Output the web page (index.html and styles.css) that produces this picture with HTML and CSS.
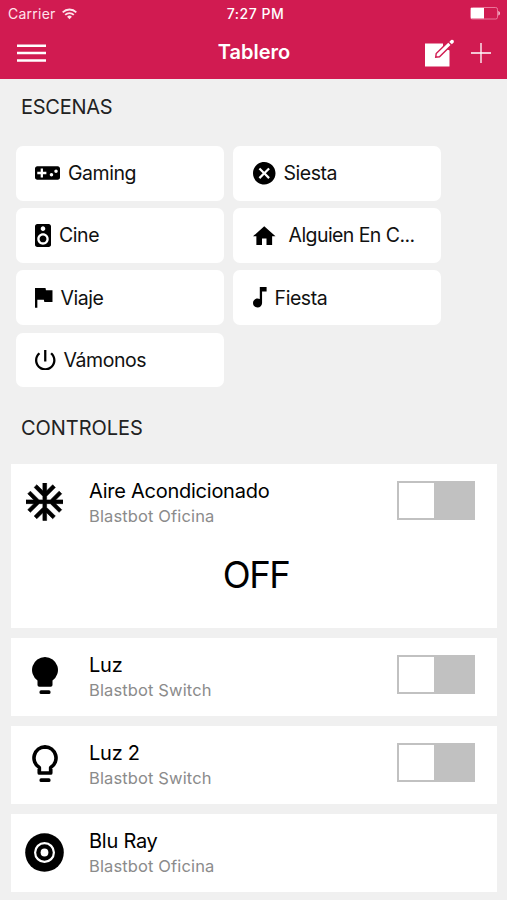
FILE: index.html
```html
<!DOCTYPE html>
<html lang="es">
<head>
<meta charset="utf-8">
<title>Tablero</title>
<link rel="stylesheet" href="styles.css">
</head>
<body>
<header class="header">
  <div class="status">
    <div class="carrier"><span>Carrier</span>
      <svg width="15" height="12" viewBox="0 0 15 12" fill="none" stroke="currentColor" stroke-width="1.8"><path d="M.7 4.3a9.6 9.6 0 0 1 13.6 0M3.2 6.9a6 6 0 0 1 8.6 0"/><path d="M7.5 11.2 5.1 8.7a3.5 3.5 0 0 1 4.8 0z" fill="currentColor" stroke="none"/></svg>
    </div>
    <div class="time">7:27 PM</div>
    <svg class="battery" width="30" height="13" viewBox="0 0 30 13"><rect x=".5" y=".5" width="27" height="11.5" rx="1.8" fill="none" stroke="#f08eae" stroke-width=".8"/><path d="M1 1h13v10.5H1z" fill="#fff"/><path d="M28.5 4c1.6.6 1.6 4 0 4.600z" fill="#fff"/></svg>
  </div>
  <nav class="nav">
    <svg width="29" height="18" viewBox="0 0 29 18" fill="none" stroke="#fff" stroke-width="2.5"><path d="M0 1.800h29M0 9h29M0 16.400h29"/></svg>
    <h1 class="title">Tablero</h1>
    <div class="actions">
      <svg width="30" height="28" viewBox="0 0 30 28"><path d="M0 4.500h24.500v23H0z" fill="#fff"/><path d="M18 4h7v7.500l-3-1-4-4z" fill="#d11b51"/><path d="m10.700 18.300.5-3.800L23.300 2.800l3.200 3.100L14.500 17.800z" fill="#fff" stroke="#d11b51" stroke-width="1.400"/><path d="m24.300 2.900 1.800-1.900q1-.7 1.900.1l.5.5q.8.9.1 1.800l-1.700 1.900z" fill="#fff"/></svg>
      <svg width="20" height="20" viewBox="0 0 20 20" fill="none" stroke="#fff" stroke-width="1.300"><path d="M10 0v20M0 10h20"/></svg>
    </div>
  </nav>
</header>
<main>
  <h2 class="heading scenes-heading">ESCENAS</h2>
  <section class="scenes">
    <div class="scene"><svg width="25" height="14" viewBox="1 6 22 12"><path d="M21 6H3c-1.100 0-2 .9-2 2v8c0 1.100.9 2 2 2h18c1.100 0 2-.9 2-2V8c0-1.100-.9-2-2-2zm-10 7H8v3H6v-3H3v-2h3V8h2v3h3v2zm4.500 2c-.83 0-1.500-.67-1.500-1.500s.67-1.500 1.500-1.500 1.500.67 1.500 1.500-.67 1.500-1.500 1.500zm4-3c-.83 0-1.500-.67-1.500-1.500S18.670 9 19.500 9s1.500.67 1.500 1.500-.67 1.500-1.500 1.500z"/></svg><span>Gaming</span></div>
    <div class="scene"><svg width="22.500" height="22.500" viewBox="2 2 20 20"><path d="M12 2C6.470 2 2 6.470 2 12s4.470 10 10 10 10-4.470 10-10S17.530 2 12 2zm5 13.590L15.590 17 12 13.410 8.410 17 7 15.590 10.590 12 7 8.410 8.410 7 12 10.590 15.590 7 17 8.410 13.410 12 17 15.590z"/></svg><span>Siesta</span></div>
    <div class="scene"><svg width="16" height="23" viewBox="5 2 14 20"><path d="M17 2H7c-1.100 0-2 .9-2 2v16c0 1.100.9 1.990 2 1.990L17 22c1.100 0 2-.9 2-2V4c0-1.100-.9-2-2-2zm-5 2c1.100 0 2 .9 2 2s-.9 2-2 2c-1.110 0-2-.9-2-2s.89-2 2-2zm0 16c-2.760 0-5-2.240-5-5s2.240-5 5-5 5 2.240 5 5-2.240 5-5 5zm0-8c-1.660 0-3 1.340-3 3s1.340 3 3 3 3-1.340 3-3-1.340-3-3-3z"/></svg><span>Cine</span></div>
    <div class="scene scene-wide"><svg width="22.500" height="19.500" viewBox="2 3 20 17"><path d="M10 20v-6h4v6h5v-8h3L12 3 2 12h3v8z"/></svg><span>Alguien En C...</span></div>
    <div class="scene"><svg width="17.500" height="19.800" viewBox="5 4 15 17"><path d="M14.400 6L14 4H5v17h2v-7h5.600l.4 2h7V6z"/></svg><span>Viaje</span></div>
    <div class="scene"><svg width="13.600" height="20.500" viewBox="6 3 12 18"><path d="M12 3v10.550c-.59-.34-1.270-.55-2-.55-2.210 0-4 1.790-4 4s1.790 4 4 4 4-1.790 4-4V7h4V3h-6z"/></svg><span>Fiesta</span></div>
    <div class="scene"><svg width="20.500" height="20.500" viewBox="3 3 18 18"><path d="M13 3h-2v10h2V3zm4.830 2.170l-1.420 1.420C17.990 7.860 19 9.810 19 12c0 3.870-3.130 7-7 7s-7-3.130-7-7c0-2.190 1.010-4.140 2.580-5.420L6.170 5.170C4.230 6.820 3 9.260 3 12c0 4.970 4.030 9 9 9s9-4.030 9-9c0-2.740-1.230-5.180-3.170-6.830z"/></svg><span>Vámonos</span></div>
  </section>
  <h2 class="heading controls-heading">CONTROLES</h2>
  <section class="controls">
    <article class="control">
      <div class="row"><div class="icon"><svg width="37.500" height="37.500" viewBox="2 2 20 20"><path stroke="#000" stroke-width=".3" d="M22 11h-4.170l3.240-3.240-1.410-1.420L15 11h-2V9l4.660-4.660-1.420-1.410L13 6.170V2h-2v4.170L7.760 2.930 6.340 4.340 11 9v2H9L4.340 6.340 2.930 7.760 6.170 11H2v2h4.170l-3.240 3.240 1.410 1.420L9 13h2v2l-4.660 4.660 1.420 1.410L11 17.830V22h2v-4.170l3.240 3.240 1.420-1.410L13 15v-2h2l4.660 4.660 1.410-1.420L17.830 13H22z"/></svg></div>
        <div class="info"><div class="name">Aire Acondicionado</div><div class="device">Blastbot Oficina</div></div><div class="toggle"><div class="knob"></div></div></div>
      <div class="state">OFF</div>
    </article>
    <article class="control">
      <div class="row"><div class="icon"><svg width="26" height="38" viewBox="0 0 26 38"><path d="M13 0a13 13 0 0 1 7.500 23.600V28q0 1.800-1.800 1.800H7.300q-1.800 0-1.800-1.800v-4.400A13 13 0 0 1 13 0z"/><rect x="7.500" y="33.300" width="11" height="3.800" rx="1.500"/></svg></div>
        <div class="info"><div class="name">Luz</div><div class="device">Blastbot Switch</div></div><div class="toggle"><div class="knob"></div></div></div>
    </article>
    <article class="control">
      <div class="row"><div class="icon"><svg width="26" height="38" viewBox="0 0 26 38"><path d="M13 1.850a11.200 11.200 0 0 1 5.700 20.700V28H7.300v-5.450A11.200 11.200 0 0 1 13 1.850z" fill="none" stroke="#000" stroke-width="3.700" stroke-linejoin="round"/><rect x="7.500" y="33.300" width="11" height="3.800" rx="1.500"/></svg></div>
        <div class="info"><div class="name">Luz 2</div><div class="device">Blastbot Switch</div></div><div class="toggle"><div class="knob"></div></div></div>
    </article>
    <article class="control">
      <div class="row"><div class="icon"><svg width="39" height="39" viewBox="0 0 39 39"><circle cx="19.500" cy="19.500" r="19.300"/><circle cx="19.500" cy="19.500" r="9.400" fill="none" stroke="#fff" stroke-width="2.200"/><circle cx="19.500" cy="19.500" r="3.900" fill="#fff"/></svg></div>
        <div class="info"><div class="name">Blu Ray</div><div class="device">Blastbot Oficina</div></div></div>
    </article>
  </section>
</main>
</body>
</html>
```
FILE: styles.css
```css
* { box-sizing: border-box; }
body {
  margin: 0;
  height: 900px;
  overflow: hidden;
  background: #f0f0f0;
  color: #000;
  font-family: Inter, "Liberation Sans", sans-serif;
}
svg { display: block; flex: none; }
h1, h2 { margin: 0; }
.header { height: 79px; background: #d11b51; color: #fff; }
.status {
  height: 27px;
  padding: 0 7px 0 8px;
  display: grid;
  grid-template-columns: 1fr auto 1fr;
  align-items: center;
  font-size: 14px;
  line-height: 27px;
}
.carrier { display: flex; align-items: center; gap: 6px; color: #ffe3ec; letter-spacing: .25px; }
.time { font-weight: 500; font-size: 14px; letter-spacing: .55px; padding-left: 3px; }
.battery { justify-self: end; }
.nav {
  height: 51px;
  padding: 0 16px 0 17px;
  display: grid;
  grid-template-columns: 1fr auto 1fr;
  align-items: center;
}
.title { font-size: 20px; line-height: 24px; font-weight: 600; margin-top: -1px; }
.actions { justify-self: end; display: flex; align-items: center; gap: 16px; }
.heading {
  padding-left: 21px;
  font-size: 20px;
  line-height: 24px;
  font-weight: 400;
  letter-spacing: -.25px;
  color: #222;
}
.scenes-heading { margin-top: 16px; }
.scenes {
  margin: 27px 0 0 16px;
  display: grid;
  grid-template-columns: 208px 208px;
  grid-auto-rows: 54.600px;
  gap: 7.600px 9px;
}
.scene {
  display: flex;
  align-items: center;
  gap: 8px;
  padding-left: 19px;
  background: #fff;
  border-radius: 7px;
  font-size: 19.500px;
  letter-spacing: -.45px;
  color: #111;
  white-space: nowrap;
}
.scene:nth-child(even) { padding-left: 20px; }
.scene-wide { gap: 13px; letter-spacing: -.57px; }
.controls-heading { margin-top: 29px; letter-spacing: -.05px; }
.controls {
  margin: 24px 10px 0 11px;
  display: flex;
  flex-direction: column;
  gap: 10px;
}
.control { background: #fff; }
.row { height: 78px; display: flex; align-items: center; padding-right: 22px; }
.icon { width: 67px; padding-bottom: 2px; display: flex; justify-content: center; }
.info { flex: 1; padding: 1px 0 0 11px; }
.name { font-size: 20px; line-height: 25px; letter-spacing: -.25px; }
.device { font-size: 16.500px; line-height: 25px; letter-spacing: .13px; color: #8b8b8b; }
.toggle { width: 78px; height: 39px; margin-top: -5px; padding: 2px; background: #c1c1c1; }
.knob { width: 35px; height: 35px; background: #fff; }
.state {
  height: 86px;
  padding: 10px 0 0 4px;
  font-size: 36.500px;
  line-height: 46px;
  letter-spacing: -1.500px;
  text-align: center;
}
```
